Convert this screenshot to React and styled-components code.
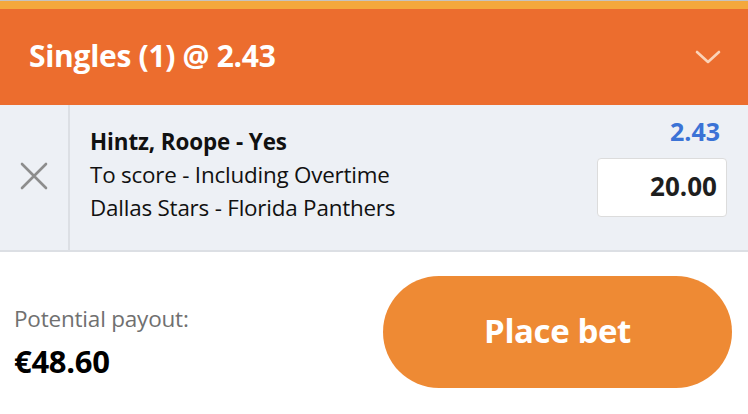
import styled, { createGlobalStyle } from "styled-components";

const GlobalStyle = createGlobalStyle`
  html, body {
    margin: 0;
    padding: 0;
    background: #ffffff;
    font-family: "Open Sans", "Noto Sans", sans-serif;
  }
  * {
    box-sizing: border-box;
  }
`;

export default function App() {
  return (
    <>
      <GlobalStyle />
      <Slip>
        <Header>
          <Title>Singles (1) @ 2.43</Title>
          <svg width="26" height="16" viewBox="0 0 26 16">
            <path
              d="M2 3 L13 13 L24 3"
              fill="none"
              stroke="#fbd3b8"
              strokeWidth="2.6"
              strokeLinecap="round"
              strokeLinejoin="round"
            />
          </svg>
        </Header>
        <Selection>
          <RemoveCell>
            <svg width="28" height="28" viewBox="0 0 28 28">
              <path
                d="M2 2 L26 26 M26 2 L2 26"
                stroke="#8d8d8d"
                strokeWidth="2.6"
                strokeLinecap="round"
              />
            </svg>
          </RemoveCell>
          <Details>
            <Info>
              <Line $bold>Hintz, Roope - Yes</Line>
              <Line>To score - Including Overtime</Line>
              <Line>Dallas Stars - Florida Panthers</Line>
            </Info>
            <Stake>
              <Odds>2.43</Odds>
              <StakeInput defaultValue="20.00" />
            </Stake>
          </Details>
        </Selection>
        <Footer>
          <Payout>
            <PayoutLabel>Potential payout:</PayoutLabel>
            <PayoutValue>€48.60</PayoutValue>
          </Payout>
          <PlaceButton>Place bet</PlaceButton>
        </Footer>
      </Slip>
    </>
  );
}

const Slip = styled.div`
  width: 748px;
  height: 414px;
  border-top: 1px solid #c6c3bf;
  display: flex;
  flex-direction: column;
  overflow: hidden;
`;

const Header = styled.div`
  height: 104px;
  border-top: 8px solid #f4a83c;
  background: #ec6d2e;
  display: flex;
  align-items: center;
  justify-content: space-between;
  padding: 0 27px 0 29px;
`;

const Title = styled.h1`
  margin: 0 0 3px;
  color: #ffffff;
  font-size: 30px;
  font-weight: 700;
  letter-spacing: -0.3px;
`;

const Selection = styled.div`
  display: flex;
  background: #edf0f5;
  border-bottom: 2px solid #dcdfe4;
  height: 147px;
`;

const RemoveCell = styled.div`
  width: 70px;
  flex-shrink: 0;
  border-right: 2px solid #dcdfe4;
  display: flex;
  align-items: center;
  justify-content: center;
  padding-bottom: 4px;
`;

const Details = styled.div`
  flex: 1;
  display: flex;
  justify-content: space-between;
  padding: 11px 21px 0 20px;
`;

const Info = styled.div`
  display: flex;
  flex-direction: column;
  padding-top: 9px;
`;

const Line = styled.div`
  font-size: 22.4px;
  line-height: 33px;
  color: #111111;
  font-weight: ${(p) => (p.$bold ? 700 : 400)};
  letter-spacing: ${(p) => (p.$bold ? "-0.1px" : "-0.2px")};
`;

const Stake = styled.div`
  display: flex;
  flex-direction: column;
  align-items: flex-end;
`;

const Odds = styled.div`
  color: #3b73d6;
  font-size: 25px;
  font-weight: 700;
  line-height: 30px;
  margin-right: 7px;
`;

const StakeInput = styled.input`
  margin-top: 12px;
  width: 130px;
  height: 59px;
  border: 1.5px solid #dcdcdc;
  border-radius: 4px;
  background: #ffffff;
  text-align: right;
  padding: 0 9px 3px 0;
  font-family: inherit;
  font-size: 26px;
  font-weight: 700;
  color: #1e1e1e;
  outline: none;
`;

const Footer = styled.div`
  flex: 1;
  display: flex;
  align-items: flex-start;
  justify-content: space-between;
  padding: 24px 16px 0 14px;
`;

const Payout = styled.div`
  display: flex;
  flex-direction: column;
  padding-top: 28px;
`;

const PayoutLabel = styled.div`
  font-size: 22.5px;
  color: #707070;
  line-height: 30px;
  letter-spacing: -0.2px;
`;

const PayoutValue = styled.div`
  margin-top: 10px;
  font-size: 31px;
  font-weight: 700;
  color: #000000;
  line-height: 34px;
  letter-spacing: -0.3px;
`;

const PlaceButton = styled.button`
  width: 349px;
  height: 112px;
  border: none;
  border-radius: 56px;
  background: #ee8a34;
  color: #ffffff;
  font-family: inherit;
  font-size: 33px;
  font-weight: 700;
  letter-spacing: -0.4px;
  padding-bottom: 4px;
  cursor: pointer;
`;
